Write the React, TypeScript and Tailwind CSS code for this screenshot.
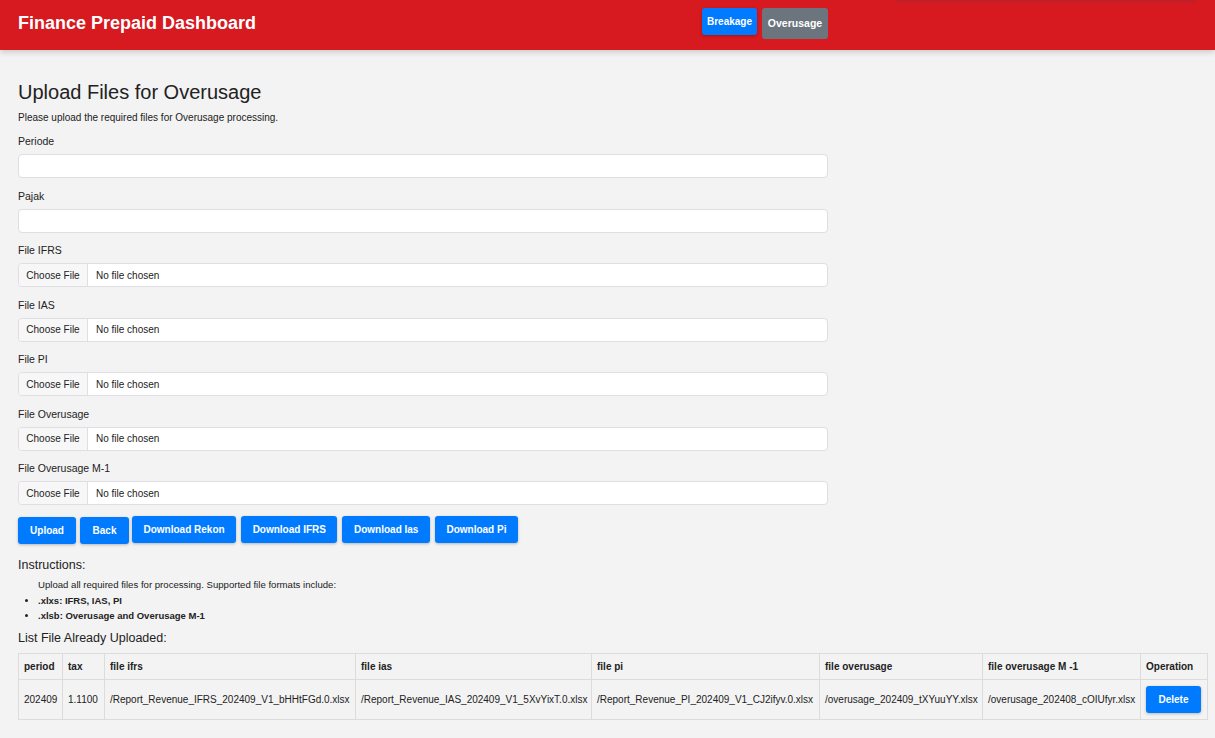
import React from "react";

const fileFields = ["File IFRS", "File IAS", "File PI", "File Overusage", "File Overusage M-1"];

const rows = [
  {
    period: "202409",
    tax: "1.1100",
    ifrs: "/Report_Revenue_IFRS_202409_V1_bHHtFGd.0.xlsx",
    ias: "/Report_Revenue_IAS_202409_V1_5XvYixT.0.xlsx",
    pi: "/Report_Revenue_PI_202409_V1_CJ2ifyv.0.xlsx",
    over: "/overusage_202409_tXYuuYY.xlsx",
    overM1: "/overusage_202408_cOIUfyr.xlsx",
  },
];

const headers = [
  { label: "period", w: "w-[44px]" },
  { label: "tax", w: "w-[42px]" },
  { label: "file ifrs", w: "w-[251px]" },
  { label: "file ias", w: "w-[236px]" },
  { label: "file pi", w: "w-[228px]" },
  { label: "file overusage", w: "w-[163px]" },
  { label: "file overusage M -1", w: "w-[158px]" },
  { label: "Operation", w: "w-[67px]" },
];

function FileInput({ label }: { label: string }) {
  return (
    <div className="mb-[11.5px]">
      <div className="mb-[6px] h-[13px] text-[10.5px] leading-[13px] text-[#222]">{label}</div>
      <div className="flex h-[24px] w-[810px] items-center overflow-hidden rounded-[4px] border border-[#dedee3] bg-white text-[10px] text-[#222]">
        <div className="flex h-full w-[69px] items-center justify-center border-r border-[#dedee3] bg-[#f7f7f8]">Choose File</div>
        <div className="pl-[8px]">No file chosen</div>
      </div>
    </div>
  );
}

function App() {
  return (
    <div className="min-h-[738px] bg-[#f3f3f3] font-['Liberation_Sans',Arial,sans-serif] text-[#222]">
      <div className="relative flex h-[50px] items-center bg-[#d71920] shadow-[0_2px_6px_rgba(0,0,0,0.18)]">
        <div className="-mt-[5px] w-[702px] pl-[18px] text-[18px] font-bold leading-none text-white">Finance Prepaid Dashboard</div>
        <div className="flex items-start gap-[5px] self-start pt-[8px]">
          <button className="h-[27px] w-[55px] rounded-[3px] bg-[#007bff] text-[10px] font-bold text-white shadow-[0_1px_3px_rgba(0,0,0,0.25)]">
            Breakage
          </button>
          <button className="h-[31px] w-[66px] rounded-[3px] bg-[#6c757d] text-[10.5px] font-bold text-white">Overusage</button>
        </div>
        <div className="absolute right-[20px] top-0 h-[3px] w-[300px] rounded-b-[8px] bg-[#c41e26]" />
      </div>

      <div className="pb-[19px] pl-[18px] pr-[8px] pt-[29px]">
        <h1 className="text-[20px] leading-[26px] text-[#222]">Upload Files for Overusage</h1>
        <p className="mt-[7px] text-[10px] leading-[12px]">Please upload the required files for Overusage processing.</p>

        <div className="mt-[11px]">
          <div className="mb-[11.5px]">
            <div className="mb-[6px] h-[13px] text-[10.5px] leading-[13px]">Periode</div>
            <div className="h-[24px] w-[810px] rounded-[4px] border border-[#dedee3] bg-white" />
          </div>
          <div className="mb-[11.5px]">
            <div className="mb-[6px] h-[13px] text-[10.5px] leading-[13px]">Pajak</div>
            <div className="h-[24px] w-[810px] rounded-[4px] border border-[#dedee3] bg-white" />
          </div>
          {fileFields.map((f) => (
            <FileInput key={f} label={f} />
          ))}
        </div>

        <div className="-mt-[1px] flex items-start">
          <button className="mt-[1px] h-[27px] w-[58px] rounded-[3px] bg-[#007bff] text-[10px] font-bold text-white shadow-[0_1px_3px_rgba(0,0,0,0.25)]">
            Upload
          </button>
          <button className="ml-[4px] mt-[1px] h-[27px] w-[49px] rounded-[3px] bg-[#007bff] text-[10px] font-bold text-white shadow-[0_1px_3px_rgba(0,0,0,0.25)]">
            Back
          </button>
          <div className="ml-[3px] flex gap-[5px]">
            {["Download Rekon", "Download IFRS", "Download Ias", "Download Pi"].map((b) => (
              <button
                key={b}
                className="h-[27px] rounded-[3px] bg-[#007bff] px-[11.5px] text-[10px] font-bold text-white shadow-[0_1px_3px_rgba(0,0,0,0.25)]"
              >
                {b}
              </button>
            ))}
          </div>
        </div>

        <h2 className="mt-[13px] text-[12.5px] leading-[17px]">Instructions:</h2>
        <p className="mt-[5.5px] pl-[20px] text-[9.6px] leading-[12px]">
          Upload all required files for processing. Supported file formats include:
        </p>
        <ul className="mt-[1.5px] list-disc pl-[20px] text-[9.5px] font-bold">
          <li className="h-[15px] leading-[15px]">.xlxs: IFRS, IAS, PI</li>
          <li className="h-[15px] leading-[15px]">.xlsb: Overusage and Overusage M-1</li>
        </ul>
        <h2 className="mt-[7px] text-[12.5px] leading-[17px]">List File Already Uploaded:</h2>

        <table className="mt-[6.5px] w-full table-fixed border-collapse text-[10px]">
          <thead>
            <tr className="h-[26px] text-left">
              {headers.map((h) => (
                <th key={h.label} className={`${h.w} border border-[#dcdcdc] px-[5px] font-bold`}>
                  {h.label}
                </th>
              ))}
            </tr>
          </thead>
          <tbody>
            {rows.map((r) => (
              <tr key={r.period} className="h-[40px] whitespace-nowrap">
                <td className="border border-[#dcdcdc] px-[5px]">{r.period}</td>
                <td className="border border-[#dcdcdc] px-[5px]">{r.tax}</td>
                <td className="border border-[#dcdcdc] px-[5px]">{r.ifrs}</td>
                <td className="border border-[#dcdcdc] px-[5px]">{r.ias}</td>
                <td className="border border-[#dcdcdc] px-[5px]">{r.pi}</td>
                <td className="border border-[#dcdcdc] px-[5px]">{r.over}</td>
                <td className="border border-[#dcdcdc] px-[5px]">{r.overM1}</td>
                <td className="border border-[#dcdcdc] px-[5px]">
                  <button className="h-[27px] w-[55px] rounded-[3px] bg-[#007bff] text-[10px] font-bold text-white shadow-[0_1px_3px_rgba(0,0,0,0.25)]">
                    Delete
                  </button>
                </td>
              </tr>
            ))}
          </tbody>
        </table>
      </div>
    </div>
  );
}

export default App;
